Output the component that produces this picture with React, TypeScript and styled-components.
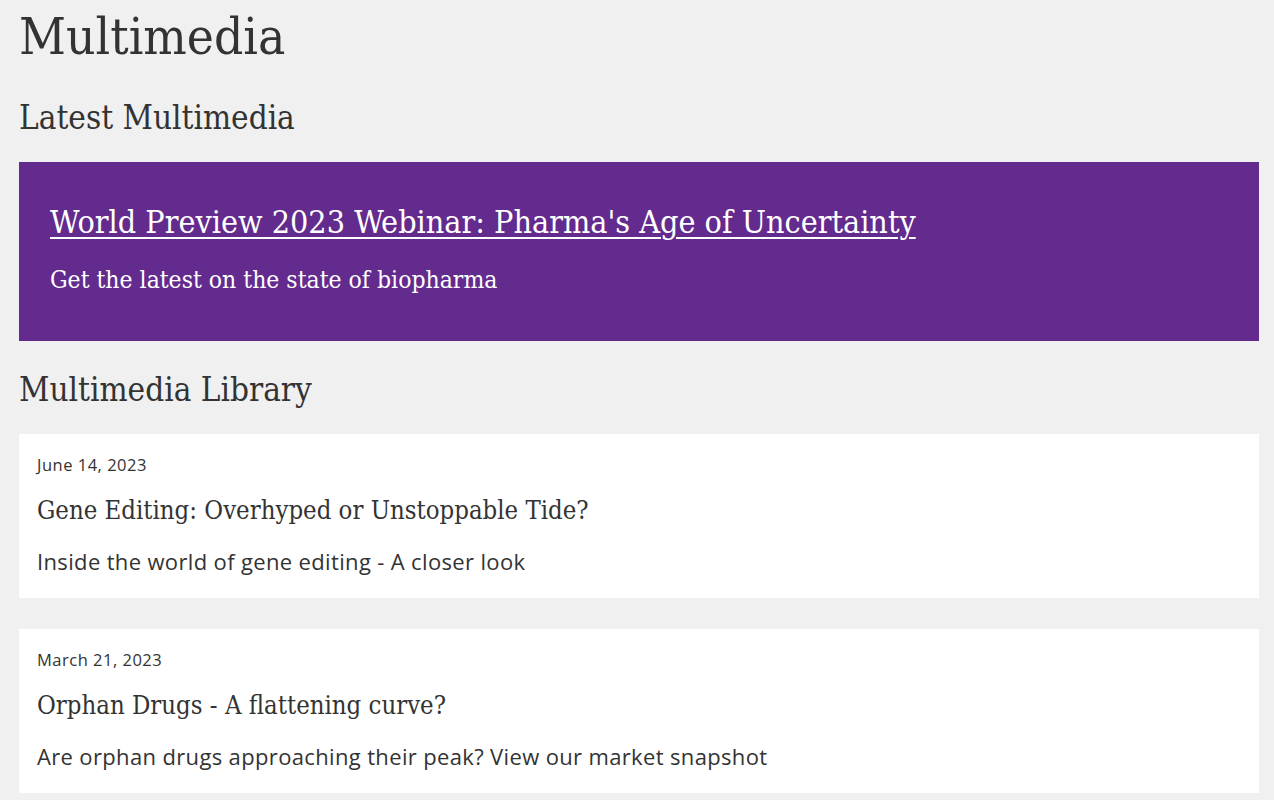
import styled, { createGlobalStyle } from "styled-components";

interface MediaItem {
  date: string;
  title: string;
  summary: string;
}

const library: MediaItem[] = [
  {
    date: "June 14, 2023",
    title: "Gene Editing: Overhyped or Unstoppable Tide?",
    summary: "Inside the world of gene editing - A closer look",
  },
  {
    date: "March 21, 2023",
    title: "Orphan Drugs - A flattening curve?",
    summary: "Are orphan drugs approaching their peak? View our market snapshot",
  },
];

const slab = `"DejaVu Serif Condensed", "DejaVu Serif", serif`;
const sans = `"Open Sans", Lato, sans-serif`;

const GlobalStyle = createGlobalStyle`
  body {
    margin: 0;
    background: #f0f0f0;
    color: #333;
    font-family: ${sans};
  }
`;

const Page = styled.main`
  padding: 0 15px 0 19px;
`;

const PageTitle = styled.h1`
  margin: 0;
  padding-top: 7px;
  font-family: ${slab};
  font-weight: 400;
  font-size: 51px;
  line-height: 60px;
  color: #333;
`;

const SectionTitle = styled.h2<{ $top: number }>`
  margin: ${(p) => p.$top}px 0 0;
  font-family: ${slab};
  font-weight: 400;
  font-size: 33px;
  line-height: 42px;
  color: #333;
`;

const Feature = styled.section`
  margin-top: 23px;
  background: #632b8d;
  color: #fff;
  padding: 41px 31px 45px;
`;

const FeatureLink = styled.a`
  display: block;
  font-family: ${slab};
  font-size: 32px;
  line-height: 38px;
  color: #fff;
  text-decoration: underline;
  text-underline-offset: 4px;
  text-decoration-thickness: 2px;
`;

const FeatureText = styled.p`
  margin: 23px 0 0;
  font-family: ${slab};
  font-size: 24.5px;
  line-height: 32px;
`;

const CardList = styled.div`
  display: flex;
  flex-direction: column;
  gap: 31px;
  margin-top: 23px;
`;

const Card = styled.article`
  background: #fff;
  padding: 20px 18px 22px;
`;

const CardDate = styled.div`
  font-size: 16.5px;
  line-height: 22px;
  letter-spacing: 0.5px;
  color: #333;
`;

const CardTitle = styled.h3`
  margin: 17px 0 0;
  font-family: ${slab};
  font-weight: 400;
  font-size: 25.5px;
  line-height: 34px;
  color: #333;
`;

const CardText = styled.p`
  margin: 19px 0 0;
  font-size: 22px;
  line-height: 30px;
  letter-spacing: 0.35px;
  color: #333;
`;

export default function App() {
  return (
    <>
      <GlobalStyle />
      <Page>
        <PageTitle>Multimedia</PageTitle>
        <SectionTitle $top={30}>Latest Multimedia</SectionTitle>
        <Feature>
          <FeatureLink href="#">
            World Preview 2023 Webinar: Pharma's Age of Uncertainty
          </FeatureLink>
          <FeatureText>Get the latest on the state of biopharma</FeatureText>
        </Feature>
        <SectionTitle $top={28}>Multimedia Library</SectionTitle>
        <CardList>
          {library.map((item) => (
            <Card key={item.title}>
              <CardDate>{item.date}</CardDate>
              <CardTitle>{item.title}</CardTitle>
              <CardText>{item.summary}</CardText>
            </Card>
          ))}
        </CardList>
      </Page>
    </>
  );
}
